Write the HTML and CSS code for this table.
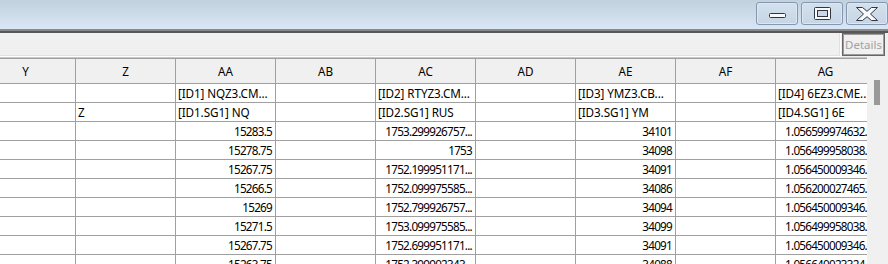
FILE: index.html
```html
<!DOCTYPE html>
<html>
<head>
<meta charset="utf-8">
<link rel="stylesheet" href="styles.css">
</head>
<body>
<div class="window">
  <div class="titlebar">
    <div class="caption-buttons">
      <button class="cap-btn">
        <svg class="ico-min" width="17" height="5" viewBox="0 0 17 5"><rect x="0.5" y="0.5" width="16" height="4" rx="1" fill="#f8fafc" stroke="#2f3640"/></svg>
      </button>
      <button class="cap-btn">
        <svg width="17" height="13" viewBox="0 0 17 13"><rect x="0.5" y="0.5" width="16" height="12" rx="1" fill="#f8fafc" stroke="#2f3640"/><rect x="3.5" y="3.5" width="10" height="6" fill="#c9d7e6" stroke="#2f3640"/></svg>
      </button>
      <button class="cap-btn">
        <svg width="22" height="14" viewBox="0 0 22 14"><polygon points="0.5,0.5 6.5,0.5 11,4.3 15.5,0.5 21.5,0.5 14.5,7 21.5,13.5 15.5,13.5 11,9.7 6.5,13.5 0.5,13.5 7.5,7" fill="#f8fafc" stroke="#2f3640" stroke-linejoin="round"/></svg>
      </button>
    </div>
  </div>
  <div class="frame-edge"></div>
  <div class="toolbar">
    <div class="toolbar-field"></div>
    <button class="details-btn" disabled>Details</button>
  </div>
  <div class="grid-area">
    <div class="grid-viewport">
      <div class="grid">
        <div class="row hdr">
          <div class="cell">Y</div><div class="cell">Z</div><div class="cell">AA</div><div class="cell">AB</div><div class="cell">AC</div><div class="cell">AD</div><div class="cell">AE</div><div class="cell">AF</div><div class="cell">AG</div>
        </div>
        <div class="row">
          <div class="cell"></div><div class="cell"></div><div class="cell">[ID1] NQZ3.CM...</div><div class="cell"></div><div class="cell">[ID2] RTYZ3.CM...</div><div class="cell"></div><div class="cell">[ID3] YMZ3.CB...</div><div class="cell"></div><div class="cell">[ID4] 6EZ3.CME..</div>
        </div>
        <div class="row">
          <div class="cell"></div><div class="cell">Z</div><div class="cell">[ID1.SG1] NQ</div><div class="cell"></div><div class="cell">[ID2.SG1] RUS</div><div class="cell"></div><div class="cell">[ID3.SG1] YM</div><div class="cell"></div><div class="cell">[ID4.SG1] 6E</div>
        </div>
        <div class="row">
          <div class="cell"></div><div class="cell"></div><div class="cell num">15283.5</div><div class="cell"></div><div class="cell num">1753.299926757...</div><div class="cell"></div><div class="cell num">34101</div><div class="cell"></div><div class="cell num">1.056599974632.</div>
        </div>
        <div class="row">
          <div class="cell"></div><div class="cell"></div><div class="cell num">15278.75</div><div class="cell"></div><div class="cell num">1753</div><div class="cell"></div><div class="cell num">34098</div><div class="cell"></div><div class="cell num">1.056499958038.</div>
        </div>
        <div class="row">
          <div class="cell"></div><div class="cell"></div><div class="cell num">15267.75</div><div class="cell"></div><div class="cell num">1752.199951171...</div><div class="cell"></div><div class="cell num">34091</div><div class="cell"></div><div class="cell num">1.056450009346.</div>
        </div>
        <div class="row">
          <div class="cell"></div><div class="cell"></div><div class="cell num">15266.5</div><div class="cell"></div><div class="cell num">1752.099975585...</div><div class="cell"></div><div class="cell num">34086</div><div class="cell"></div><div class="cell num">1.056200027465.</div>
        </div>
        <div class="row">
          <div class="cell"></div><div class="cell"></div><div class="cell num">15269</div><div class="cell"></div><div class="cell num">1752.799926757...</div><div class="cell"></div><div class="cell num">34094</div><div class="cell"></div><div class="cell num">1.056450009346.</div>
        </div>
        <div class="row">
          <div class="cell"></div><div class="cell"></div><div class="cell num">15271.5</div><div class="cell"></div><div class="cell num">1753.099975585...</div><div class="cell"></div><div class="cell num">34099</div><div class="cell"></div><div class="cell num">1.056499958038.</div>
        </div>
        <div class="row">
          <div class="cell"></div><div class="cell"></div><div class="cell num">15267.75</div><div class="cell"></div><div class="cell num">1752.699951171...</div><div class="cell"></div><div class="cell num">34091</div><div class="cell"></div><div class="cell num">1.056450009346.</div>
        </div>
        <div class="row">
          <div class="cell"></div><div class="cell"></div><div class="cell num">15263.75</div><div class="cell"></div><div class="cell num">1752.399902343...</div><div class="cell"></div><div class="cell num">34088</div><div class="cell"></div><div class="cell num">1.056640023324.</div>
        </div>
      </div>
    </div>
    <div class="vscroll"><div class="thumb"></div></div>
  </div>
</div>
</body>
</html>
```

FILE: styles.css
```css
* { box-sizing: border-box; }
html, body { margin: 0; padding: 0; }
body {
  width: 888px;
  height: 264px;
  overflow: hidden;
  background: #f0f0f0;
  font-family: "Noto Sans", "Open Sans", sans-serif;
  color: #000;
}
.window { display: flex; flex-direction: column; height: 264px; }

.titlebar {
  height: 29px;
  background: linear-gradient(#c2d1de, #d8e6f5);
  display: flex;
  justify-content: flex-end;
  align-items: flex-start;
  padding-top: 2px;
}
.caption-buttons { display: flex; gap: 3px; }
.cap-btn {
  width: 42px;
  height: 23px;
  margin: 0;
  padding: 0;
  border: 1px solid #8597ae;
  border-radius: 3px;
  background: linear-gradient(#d4e0ed, #c6d5e5);
  box-shadow: inset 0 0 0 1px #dde7f2;
  display: flex;
  align-items: center;
  justify-content: center;
}
.cap-btn svg { display: block; }
.ico-min { margin-top: 3px; }

.frame-edge {
  height: 4px;
  border-top: 2px solid #8a8a8a;
  border-bottom: 2px solid #575757;
}

.toolbar {
  height: 24px;
  display: flex;
  background: #f0f0f0;
}
.toolbar-field {
  flex: 1;
  height: 24px;
  border-bottom: 1px solid #ffffff;
  border-right: 1px solid #ffffff;
  box-shadow: inset -1px -1px 0 #e1e1e1;
}
.details-btn {
  width: 43px;
  height: 23px;
  margin: 0 3px 0 1px;
  padding: 0;
  border: 1px solid #666;
  box-shadow: inset 0 0 0 1px #9c9c9c;
  background: #f0f0f0;
  color: #a2a2a2;
  font-family: "Noto Sans", "Open Sans", sans-serif;
  font-size: 11.5px;
  line-height: 21px;
  text-align: center;
}

.grid-area {
  flex: 1;
  display: flex;
  min-height: 0;
}
.grid-viewport {
  width: 867px;
  overflow: hidden;
  border-top: 1px solid #c8c8c8;
}
.grid {
  width: 891px;
  margin-left: -24px;
  border-top: 1px solid #a0a0a0;
  font-size: 11.7px;
}
.row {
  display: grid;
  grid-template-columns: repeat(8, 100px) 91px;
  background: #fff;
}
.cell {
  height: 19px;
  line-height: 18px;
  padding: 0 2px;
  letter-spacing: -0.1px;
  border-right: 1px solid #a0a0a0;
  border-bottom: 1px solid #a0a0a0;
  white-space: nowrap;
  overflow: hidden;
}
.cell:last-child { border-right: none; }
.cell.num {
  text-align: right;
  padding-right: 3px;
  letter-spacing: -0.75px;
}
.cell.num:last-child { padding-right: 0; }
.row.hdr { background: #f0f0f0; }
.row.hdr .cell {
  height: 25px;
  line-height: 24px;
  text-align: center;
  letter-spacing: 0;
}
.row.hdr .cell:last-child { padding-left: 10px; }

.vscroll {
  width: 21px;
  background: #f0f0f0;
  padding: 23px 0 0 7px;
}
.thumb {
  width: 6px;
  height: 25px;
  background: #999;
}
```
